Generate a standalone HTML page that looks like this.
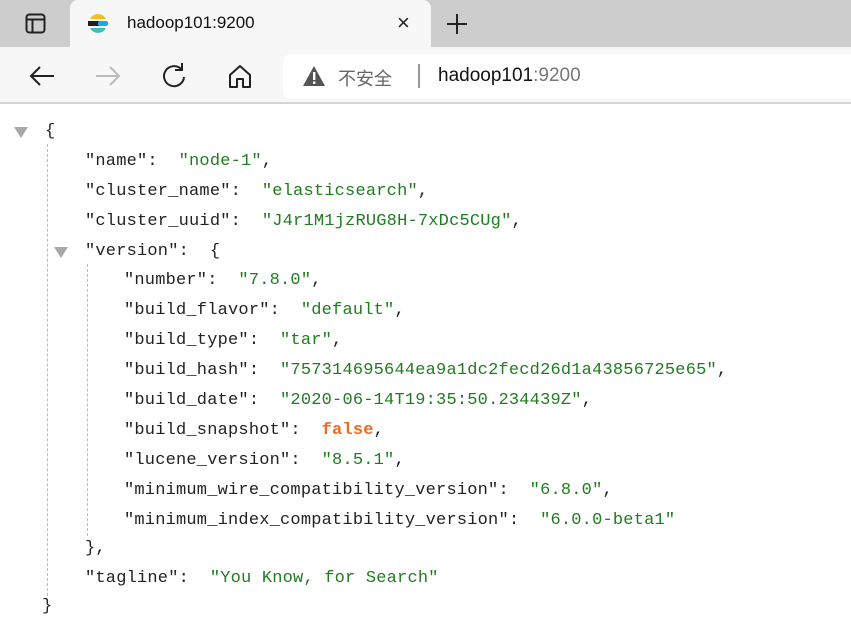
<!DOCTYPE html>
<html><head><meta charset="utf-8"><style>
*{margin:0;padding:0;box-sizing:border-box}
body{width:851px;height:633px;overflow:hidden;background:#fff;position:relative;font-family:"Liberation Sans","Noto Sans CJK SC",sans-serif}
.tabs{position:absolute;left:0;top:0;width:851px;height:47px;background:#cdcdcd}
.tab{position:absolute;left:70px;top:0;width:361px;height:48px;background:#f7f7f7;border-radius:8px 8px 0 0}
.bar{position:absolute;left:0;top:47px;width:851px;height:57px;background:#f7f7f7;border-bottom:2px solid #d4d4d4}
.addr{position:absolute;left:283px;top:7px;width:600px;height:45px;background:#fff;border-radius:8px}
.j{position:absolute;font-family:"Liberation Mono","Noto Sans CJK SC",monospace;font-size:17px;letter-spacing:0.2px;color:#222;white-space:pre;line-height:20px}
.s{color:#1f7d1f}.b{color:#f26b1d;font-weight:bold}
.tri{position:absolute;width:0;height:0;border-left:7px solid transparent;border-right:7px solid transparent;border-top:11px solid #a8a8a8}
.dl{position:absolute;border-left:1px dashed #bbb}
</style></head><body>
<div class="tabs">
 <svg style="position:absolute;left:25px;top:13px" width="22" height="22"><rect x="1.5" y="1.5" width="18" height="18" rx="3" fill="none" stroke="#222" stroke-width="2"/><line x1="1.5" y1="6.5" x2="19.5" y2="6.5" stroke="#222" stroke-width="2"/><line x1="7.5" y1="6.5" x2="7.5" y2="19.5" stroke="#222" stroke-width="2"/></svg>
 <div class="tab">
  <svg style="position:absolute;left:17px;top:12px" width="22" height="24"><path d="M3 7 A9 9 0 0 1 19 7 Z" fill="#f0bf1a"/><rect x="1" y="9" width="11" height="5" fill="#231f20"/><rect x="11" y="9" width="10" height="5" rx="2" fill="#1ba9e1"/><path d="M3 16 A9 9 0 0 0 19 16 Z" fill="#3ebeb0"/></svg>
  <div style="position:absolute;left:57px;top:13px;font-size:17px;color:#111">hadoop101:9200</div>
  <div style="position:absolute;left:327px;top:10px;font-size:22px;color:#222">×</div>
 </div>
 <svg style="position:absolute;left:446px;top:13px" width="22" height="22"><path d="M11 1V21M1 11H21" stroke="#222" stroke-width="2"/></svg>
</div>
<div class="bar">
 <svg style="position:absolute;left:28px;top:18px" width="28" height="22"><path d="M26 11H3M12 2L3 11L12 20" fill="none" stroke="#222" stroke-width="2"/></svg>
 <svg style="position:absolute;left:94px;top:18px" width="28" height="22"><path d="M2 11H25M16 2L25 11L16 20" fill="none" stroke="#bbb" stroke-width="2"/></svg>
 <svg style="position:absolute;left:160px;top:16px" width="28" height="26"><path d="M21 6A10 10 0 1 0 24 14" fill="none" stroke="#222" stroke-width="2"/><path d="M15 7L22 7L22 0" fill="none" stroke="#222" stroke-width="2"/></svg>
 <svg style="position:absolute;left:227px;top:17px" width="26" height="26"><path d="M3 11L13 2L23 11V23H16V15H10V23H3Z" fill="none" stroke="#222" stroke-width="2" stroke-linejoin="round"/></svg>
 <div class="addr">
  <svg style="position:absolute;left:19px;top:11px" width="24" height="22"><path d="M12 1L23 21H1Z" fill="#555"/><rect x="11" y="7" width="2.4" height="8" fill="#fff"/><rect x="11" y="16.5" width="2.4" height="2.4" fill="#fff"/></svg>
  <div style="position:absolute;left:55px;top:11px;font-size:18px;color:#666">不安全</div>
  <div style="position:absolute;left:135px;top:10px;width:2px;height:24px;background:#999"></div>
  <div style="position:absolute;left:155px;top:11px;font-size:19px;color:#111">hadoop101<span style="color:#777">:9200</span></div>
 </div>
</div>
<div class="tri" style="left:14px;top:127px"></div>
<div class="tri" style="left:54px;top:247px"></div>
<div class="dl" style="left:47px;top:144px;height:452px"></div>
<div class="dl" style="left:87px;top:264px;height:272px"></div>
<div class="j" style="left:45px;top:122px">{</div>
<div class="j" style="left:85px;top:152px">"name":  <span class="s">"node-1"</span>,</div>
<div class="j" style="left:85px;top:182px">"cluster_name":  <span class="s">"elasticsearch"</span>,</div>
<div class="j" style="left:85px;top:212px">"cluster_uuid":  <span class="s">"J4r1M1jzRUG8H-7xDc5CUg"</span>,</div>
<div class="j" style="left:85px;top:242px">"version":  {</div>
<div class="j" style="left:124px;top:271px">"number":  <span class="s">"7.8.0"</span>,</div>
<div class="j" style="left:124px;top:301px">"build_flavor":  <span class="s">"default"</span>,</div>
<div class="j" style="left:124px;top:331px">"build_type":  <span class="s">"tar"</span>,</div>
<div class="j" style="left:124px;top:361px">"build_hash":  <span class="s">"757314695644ea9a1dc2fecd26d1a43856725e65"</span>,</div>
<div class="j" style="left:124px;top:391px">"build_date":  <span class="s">"2020-06-14T19:35:50.234439Z"</span>,</div>
<div class="j" style="left:124px;top:421px">"build_snapshot":  <span class="b">false</span>,</div>
<div class="j" style="left:124px;top:451px">"lucene_version":  <span class="s">"8.5.1"</span>,</div>
<div class="j" style="left:124px;top:481px">"minimum_wire_compatibility_version":  <span class="s">"6.8.0"</span>,</div>
<div class="j" style="left:124px;top:511px">"minimum_index_compatibility_version":  <span class="s">"6.0.0-beta1"</span></div>
<div class="j" style="left:85px;top:539px">},</div>
<div class="j" style="left:85px;top:569px">"tagline":  <span class="s">"You Know, for Search"</span></div>
<div class="j" style="left:42px;top:597px">}</div>
</body></html>
